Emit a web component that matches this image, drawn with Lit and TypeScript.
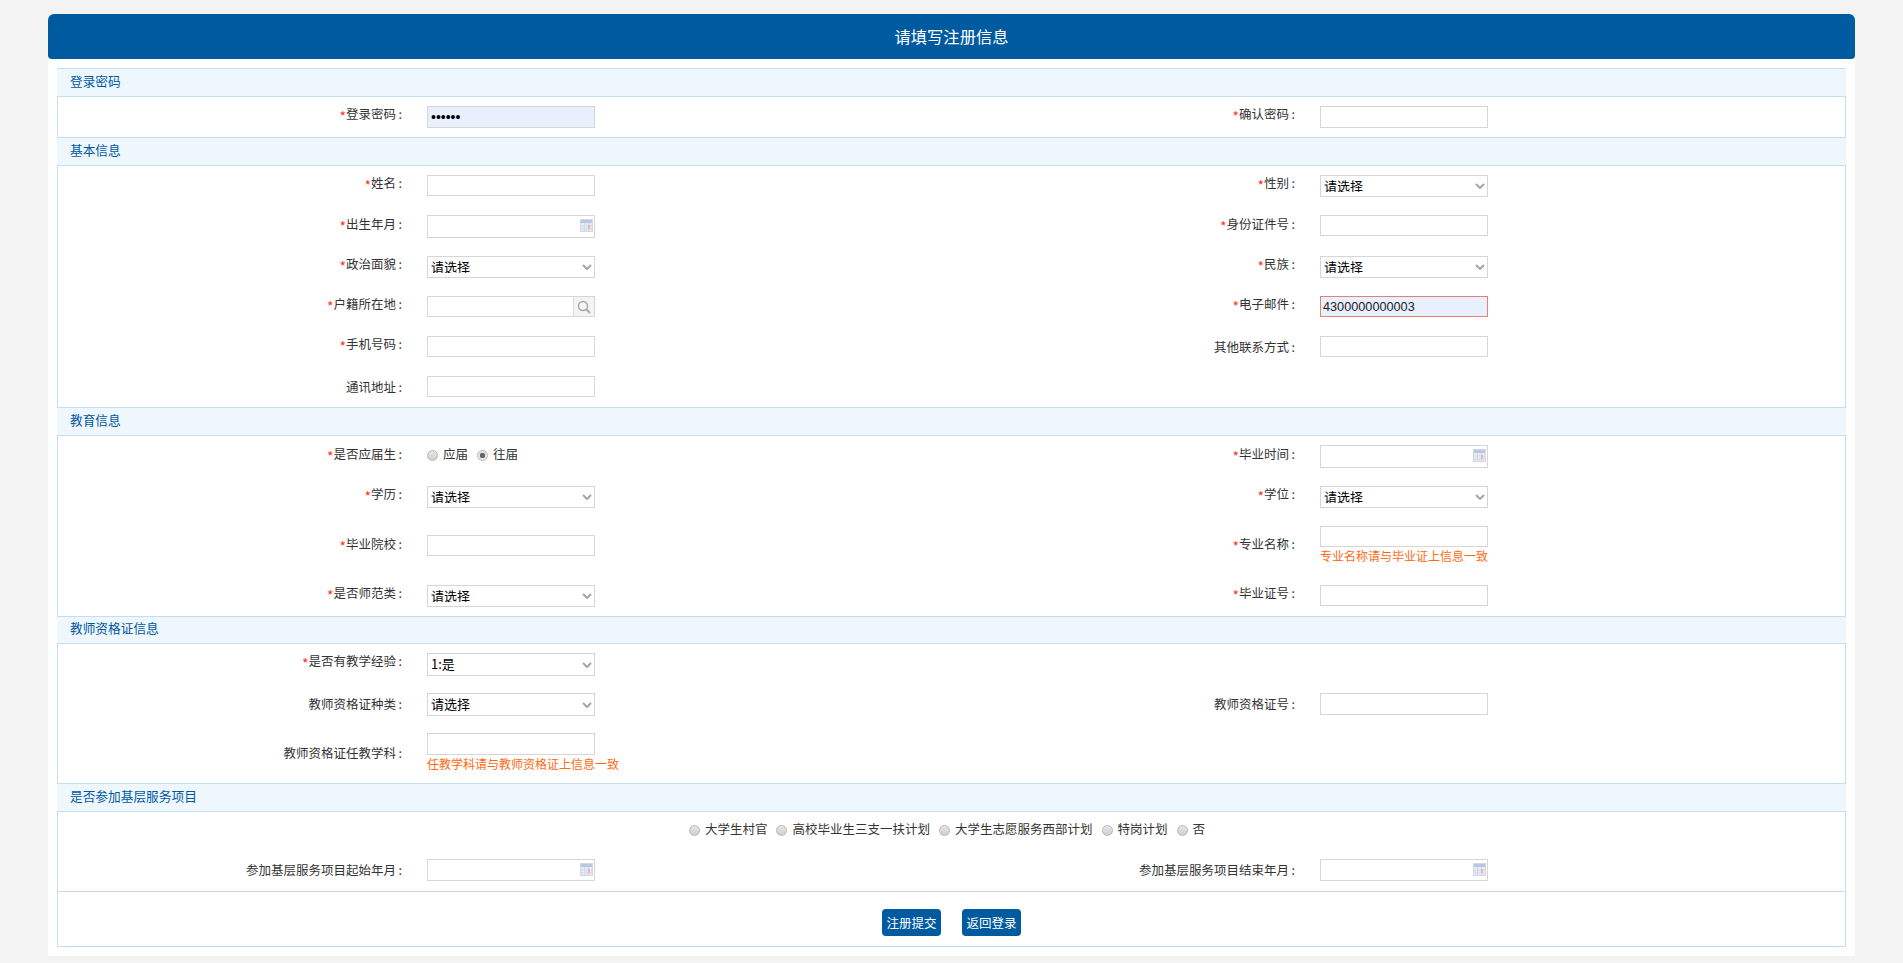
import { LitElement, html, css, nothing } from "lit";
import { customElement } from "lit/decorators.js";

type Field = {
  label: string;
  req?: boolean;
  kind?: "text" | "select" | "date" | "search" | "radio" | "password" | "error";
  h?: number;
  value?: string;
  hint?: string;
  drop?: boolean;
  options?: [string, boolean][];
};
type Row = { cells: (Field | null)[]; tall?: boolean };
type Section = { title: string; short?: boolean; rows: Row[]; plans?: string[] };

const SECTIONS: Section[] = [
  {
    title: "登录密码",
    rows: [
      {
        cells: [
          { label: "登录密码", req: true, kind: "password", h: 22, value: "123456" },
          { label: "确认密码", req: true, kind: "text", h: 22 },
        ],
      },
    ],
  },
  {
    title: "基本信息",
    rows: [
      {
        cells: [
          { label: "姓名", req: true },
          { label: "性别", req: true, kind: "select" },
        ],
      },
      {
        cells: [
          { label: "出生年月", req: true, kind: "date" },
          { label: "身份证件号", req: true },
        ],
      },
      {
        cells: [
          { label: "政治面貌", req: true, kind: "select" },
          { label: "民族", req: true, kind: "select" },
        ],
      },
      {
        cells: [
          { label: "户籍所在地", req: true, kind: "search" },
          { label: "电子邮件", req: true, kind: "error", value: "4300000000003" },
        ],
      },
      { cells: [{ label: "手机号码", req: true }, { label: "其他联系方式" }] },
      { cells: [{ label: "通讯地址" }, null] },
    ],
  },
  {
    title: "教育信息",
    rows: [
      {
        cells: [
          {
            label: "是否应届生",
            req: true,
            kind: "radio",
            options: [
              ["应届", false],
              ["往届", true],
            ],
          },
          { label: "毕业时间", req: true, kind: "date" },
        ],
      },
      {
        cells: [
          { label: "学历", req: true, kind: "select" },
          { label: "学位", req: true, kind: "select" },
        ],
      },
      {
        tall: true,
        cells: [
          { label: "毕业院校", req: true, drop: true },
          { label: "专业名称", req: true, hint: "专业名称请与毕业证上信息一致" },
        ],
      },
      {
        cells: [
          { label: "是否师范类", req: true, kind: "select" },
          { label: "毕业证号", req: true },
        ],
      },
    ],
  },
  {
    title: "教师资格证信息",
    short: true,
    rows: [
      {
        cells: [{ label: "是否有教学经验", req: true, kind: "select", h: 23, value: "1:是" }, null],
      },
      {
        cells: [
          { label: "教师资格证种类", kind: "select", h: 23 },
          { label: "教师资格证号", h: 22 },
        ],
      },
      {
        tall: true,
        cells: [
          { label: "教师资格证任教学科", h: 22, hint: "任教学科请与教师资格证上信息一致" },
          null,
        ],
      },
    ],
  },
  {
    title: "是否参加基层服务项目",
    plans: ["大学生村官", "高校毕业生三支一扶计划", "大学生志愿服务西部计划", "特岗计划", "否"],
    rows: [
      {
        cells: [
          { label: "参加基层服务项目起始年月", kind: "date", h: 22 },
          { label: "参加基层服务项目结束年月", kind: "date", h: 22 },
        ],
      },
    ],
  },
];

@customElement("app-root")
export class AppRoot extends LitElement {
  static styles = css`
    :host {
      display: block;
      height: 963px;
      overflow: hidden;
      background: #f3f3f3;
      font-family: "Noto Sans CJK SC", "Liberation Sans", sans-serif;
      font-size: 12.5px;
      color: #333;
    }
    .page {
      padding: 14px 48px 0;
    }
    .title {
      box-sizing: border-box;
      height: 45px;
      padding-bottom: 2px;
      border-radius: 6px 6px 4px 4px;
      background: #005aa0;
      color: #fff;
      font-size: 16.3px;
      display: flex;
      align-items: center;
      justify-content: center;
    }
    .card {
      background: #fff;
      padding: 9px;
    }
    .head {
      box-sizing: border-box;
      height: 29px;
      background: #eef6fe;
      border-top: 1px solid #c5dcf5;
      border-bottom: 1px solid #c5dcf5;
      padding: 0 0 5px 13px;
      display: flex;
      align-items: center;
      color: #00589f;
      font-size: 12.7px;
    }
    .head.short {
      height: 28px;
    }
    .body {
      border-left: 1px solid #c5dcf5;
      border-right: 1px solid #c5dcf5;
    }
    .row {
      display: grid;
      grid-template-columns: 344px 549px 344px 1fr;
      min-height: 40px;
    }
    .row.tall {
      min-height: 59px;
    }
    .label {
      display: flex;
      align-items: center;
      justify-content: flex-end;
      white-space: nowrap;
      padding-bottom: 2px;
    }
    .label.req {
      padding-bottom: 7px;
    }
    .star {
      color: #f33;
      font-size: 14px;
      margin-top: 5px;
    }
    .colon {
      margin-left: 2.4px;
    }
    .value {
      padding: 9px 0 0 25px;
    }
    .value.drop {
      padding-top: 18px;
    }
    .control {
      box-sizing: border-box;
      display: block;
      width: 168px;
      height: 21px;
      border: 1px solid #d6d6d6;
      border-radius: 0;
      background: #fff;
      margin: 0;
      padding: 0 3px;
      outline: none;
      font-family: "Liberation Sans", "Noto Sans CJK SC", sans-serif;
      font-size: 12.7px;
      color: #222;
    }
    .h22 {
      height: 22px;
    }
    .h23 {
      height: 23px;
    }
    .sel-wrap {
      position: relative;
      width: 168px;
    }
    .chev {
      position: absolute;
      right: 3px;
      top: 50%;
      margin-top: -3px;
      pointer-events: none;
    }
    select.control {
      appearance: none;
      font-family: "Noto Sans CJK SC", "Liberation Sans", sans-serif;
      font-size: 13px;
      color: #000;
      padding: 0 0 4px 3px;
    }
    .filled {
      background: #e8f0fe;
    }
    .error {
      border-color: #e2826f;
      padding-left: 2px;
    }
    input.control.dots {
      font-size: 14px;
      color: #000;
    }
    .date-wrap {
      position: relative;
      width: 168px;
      margin-bottom: 9px;
    }
    .date-wrap.short {
      margin-bottom: 10px;
    }
    .cal {
      position: absolute;
      right: 2px;
      top: 4px;
    }
    .search {
      box-sizing: border-box;
      display: flex;
      width: 168px;
      height: 21px;
      border: 1px solid #d6d6d6;
    }
    .search input {
      flex: 1;
      min-width: 0;
      border: 0;
      padding: 0 3px;
      outline: none;
    }
    .addon {
      box-sizing: border-box;
      width: 21px;
      background: #f4f4f4;
      border-left: 1px solid #dcdcdc;
      display: flex;
      align-items: center;
      justify-content: center;
    }
    .hint {
      box-sizing: border-box;
      height: 20px;
      padding-bottom: 4px;
      display: flex;
      align-items: center;
      white-space: nowrap;
      font-size: 12px;
      color: #ff6a13;
    }
    .radios {
      display: flex;
      align-items: center;
      height: 20px;
      white-space: nowrap;
    }
    .opt {
      display: flex;
      align-items: center;
      gap: 5px;
      margin-right: 9px;
      padding-bottom: 3px;
    }
    input[type="radio"] {
      appearance: none;
      box-sizing: border-box;
      width: 11px;
      height: 11px;
      margin: 3px 0 0;
      border: 1px solid #b8b8b8;
      border-radius: 50%;
      background: linear-gradient(#e6e6e6, #cfcfcf);
    }
    input[type="radio"]:checked {
      background: radial-gradient(circle, #666 0 2.5px, #e6e6e6 3px);
    }
    .plans {
      height: 36px;
      padding-bottom: 2px;
      justify-content: center;
    }
    .actions {
      border: 1px solid #c5dcf5;
      padding: 17px 0 10px;
      display: flex;
      justify-content: center;
      gap: 21px;
    }
    .btn {
      box-sizing: border-box;
      width: 59px;
      height: 27px;
      border: 0;
      border-radius: 4px;
      padding: 0;
      background: #005aa0;
      color: #fff;
      font-family: inherit;
      font-size: 12.5px;
    }
  `;

  private calendar() {
    return html`<svg class="cal" width="13" height="13" viewBox="0 0 13 13">
      <rect x="0.5" y="0.5" width="12" height="12" fill="#e6ebf5" stroke="#d2d8e4" />
      <rect x="1" y="1" width="11" height="3" fill="#b7c6e4" />
      <path d="M1 7h11M1 10h11M4.500 4v8M8.500 4v8" stroke="#d0daea" stroke-width="1" fill="none" />
      <rect x="8" y="6" width="2" height="4" fill="#f0b5ab" />
    </svg>`;
  }

  private control(f: Field) {
    const h = f.h ? `h${f.h}` : "";
    switch (f.kind) {
      case "select":
        return html`<div class="sel-wrap">
          <select class="control ${f.h ? h : "h22"}">
            <option>${f.value ?? "请选择"}</option>
          </select>
          <svg class="chev" width="10" height="6" viewBox="0 0 10 6" fill="none" stroke="#a4a4a4" stroke-width="2">
            <path d="M1 1 5 5 9 1" />
          </svg>
        </div>`;
      case "date":
        return html`<div class="date-wrap ${f.h === 22 ? "short" : ""}">
          <input class="control ${f.h ? h : "h23"}" />${this.calendar()}
        </div>`;
      case "search":
        return html`<div class="search">
          <input />
          <span class="addon">
            <svg width="14" height="14" viewBox="0 0 14 14" fill="none" stroke="#a8a8a8">
              <circle cx="6" cy="6" r="4.500" stroke-width="1.500" />
              <path d="M9.500 9.500 13 13" stroke-width="2" />
            </svg>
          </span>
        </div>`;
      case "radio":
        return html`<div class="radios">
          ${f.options!.map(
            ([t, on]) =>
              html`<label class="opt"><input type="radio" name="fresh" ?checked=${on} />${t}</label>`
          )}
        </div>`;
      case "password":
        return html`<input class="control h22 filled dots" type="password" .value=${f.value ?? ""} />`;
      case "error":
        return html`<input class="control filled error" .value=${f.value ?? ""} />`;
      default:
        return html`<input class="control ${h}" />`;
    }
  }

  private cell(f: Field | null) {
    if (!f) return html`<div></div><div></div>`;
    return html`
      <div class="label ${f.req ? "req" : ""}">
        ${f.req ? html`<span class="star">*</span>` : nothing}<span>${f.label}</span><span class="colon">:</span>
      </div>
      <div class="value ${f.drop ? "drop" : ""}">
        ${this.control(f)} ${f.hint ? html`<div class="hint">${f.hint}</div>` : nothing}
      </div>
    `;
  }

  render() {
    return html`<div class="page">
      <div class="title">请填写注册信息</div>
      <div class="card">
        ${SECTIONS.map(
          (s) => html`<div class="section">
            <div class="head ${s.short ? "short" : ""}">${s.title}</div>
            <div class="body">
              ${s.plans
                ? html`<div class="radios plans">
                    ${s.plans.map(
                      (p) =>
                        html`<label class="opt"><input type="radio" name="plan" />${p}</label>`
                    )}
                  </div>`
                : nothing}
              ${s.rows.map(
                (r) => html`<div class="row ${r.tall ? "tall" : ""}">
                  ${r.cells.map((c) => this.cell(c))}
                </div>`
              )}
            </div>
          </div>`
        )}
        <div class="actions">
          <button class="btn">注册提交</button>
          <button class="btn">返回登录</button>
        </div>
      </div>
    </div>`;
  }
}
